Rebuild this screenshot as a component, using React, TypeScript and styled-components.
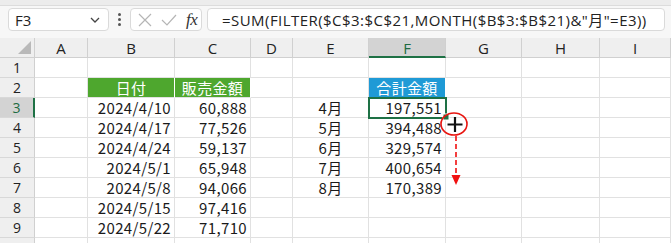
import styled, { createGlobalStyle } from "styled-components";

const GlobalStyle = createGlobalStyle`
  html, body {
    margin: 0;
    padding: 0;
    background: #ffffff;
  }
  body {
    width: 671px;
    height: 243px;
    overflow: hidden;
    font-family: "Noto Sans CJK JP", "Noto Sans", sans-serif;
  }
`;

const COLS = [
  { key: "A", width: 53 },
  { key: "B", width: 87 },
  { key: "C", width: 76 },
  { key: "D", width: 42 },
  { key: "E", width: 76 },
  { key: "F", width: 77 },
  { key: "G", width: 76 },
  { key: "H", width: 78 },
  { key: "I", width: 71 },
];

type CellData = { text: string; align?: "left" | "center" | "right"; fill?: string; color?: string };

const sheet: Record<number, Record<string, CellData>> = {
  2: {
    B: { text: "日付", align: "center", fill: "#4ea72e", color: "#ffffff" },
    C: { text: "販売金額", align: "center", fill: "#4ea72e", color: "#ffffff" },
    F: { text: "合計金額", align: "center", fill: "#1f9ad6", color: "#ffffff" },
  },
  3: { B: { text: "2024/4/10" }, C: { text: "60,888" }, E: { text: "4月", align: "center" }, F: { text: "197,551" } },
  4: { B: { text: "2024/4/17" }, C: { text: "77,526" }, E: { text: "5月", align: "center" }, F: { text: "394,488" } },
  5: { B: { text: "2024/4/24" }, C: { text: "59,137" }, E: { text: "6月", align: "center" }, F: { text: "329,574" } },
  6: { B: { text: "2024/5/1" }, C: { text: "65,948" }, E: { text: "7月", align: "center" }, F: { text: "400,654" } },
  7: { B: { text: "2024/5/8" }, C: { text: "94,066" }, E: { text: "8月", align: "center" }, F: { text: "170,389" } },
  8: { B: { text: "2024/5/15" }, C: { text: "97,416" } },
  9: { B: { text: "2024/5/22" }, C: { text: "71,710" } },
};

// --------------------- FORMULA BAR ---------------------------------

const TopStrip = styled.div`
  height: 5px;
  background: #ececec;
  border-bottom: 1px solid #dcdcdc;
`;

const Toolbar = styled.div`
  height: 32px;
  display: flex;
  align-items: flex-start;
  padding: 2px 6px 0 8px;
  background: #f7f7f7;
  box-sizing: border-box;
`;

const Box = styled.div<{ $w?: number; $grow?: boolean }>`
  height: 23px;
  box-sizing: border-box;
  background: #ffffff;
  border: 1px solid #dadada;
  border-radius: 4px;
  display: flex;
  align-items: center;
  width: ${({ $w }) => ($w ? `${$w}px` : "auto")};
  flex: ${({ $grow }) => ($grow ? 1 : "none")};
  margin-left: ${({ $grow }) => ($grow ? "5px" : "0")};
`;

const NameText = styled.span`
  flex: 1;
  padding-left: 6px;
  font-family: "Open Sans", "Noto Sans", sans-serif;
  font-size: 15px;
  color: #222;
`;

const Dots = styled.div`
  width: 21px;
  display: flex;
  flex-direction: column;
  align-items: center;
  justify-content: center;
  gap: 2px;
  height: 23px;
  span {
    width: 3px;
    height: 3px;
    border-radius: 50%;
    background: #555;
  }
`;

const FxText = styled.span`
  font-family: "Liberation Serif", serif;
  font-style: italic;
  font-size: 17px;
  color: #333;
  margin-left: 8px;
  letter-spacing: -0.5px;
`;

const FormulaText = styled.span`
  padding-left: 14px;
  font-family: "Open Sans", "Noto Sans CJK JP", sans-serif;
  font-size: 15px;
  letter-spacing: 0.45px;
  color: #222;
  white-space: nowrap;
`;

// --------------------- GRID ---------------------------------

const Grid = styled.div`
  position: relative;
  display: grid;
  grid-template-columns: 35px ${COLS.map((c) => `${c.width}px`).join(" ")};
  grid-auto-rows: 20px;
`;

const Corner = styled.div`
  background: #efefef;
  border-right: 1px solid #d0d0d0;
  border-bottom: 1px solid #d0d0d0;
  box-sizing: border-box;
  position: relative;
  &::after {
    content: "";
    position: absolute;
    right: 3px;
    bottom: 3px;
    border-left: 13px solid transparent;
    border-bottom: 13px solid #b9b9b9;
  }
`;

const ColHead = styled.div<{ $active?: boolean }>`
  box-sizing: border-box;
  background: ${({ $active }) => ($active ? "#d3d3d3" : "#efefef")};
  border-right: 1px solid #d0d0d0;
  border-bottom: ${({ $active }) => ($active ? "2px solid #1e7145" : "1px solid #d0d0d0")};
  font-family: "Open Sans", "Noto Sans", sans-serif;
  font-size: 15px;
  color: ${({ $active }) => ($active ? "#1e6b42" : "#222")};
  display: flex;
  align-items: center;
  justify-content: center;
  padding-top: 1px;
`;

const RowHead = styled.div<{ $active?: boolean }>`
  box-sizing: border-box;
  background: ${({ $active }) => ($active ? "#d3d3d3" : "#efefef")};
  border-right: ${({ $active }) => ($active ? "2px solid #1e7145" : "1px solid #d0d0d0")};
  border-bottom: 1px solid #d8d8d8;
  font-family: "Open Sans", "Noto Sans", sans-serif;
  font-size: 14px;
  color: ${({ $active }) => ($active ? "#1e6b42" : "#222")};
  display: flex;
  align-items: center;
  justify-content: center;
`;

const Cell = styled.div<{ $align?: string; $fill?: string; $color?: string; $selected?: boolean }>`
  position: relative;
  box-sizing: border-box;
  border-right: 1px solid ${({ $fill }) => ($fill ? "#ffffff" : "#e1e1e1")};
  border-bottom: 1px solid #e1e1e1;
  background: ${({ $fill }) => $fill || "#ffffff"};
  color: ${({ $color }) => $color || "#1a1a1a"};
  font-size: 15px;
  letter-spacing: 0.35px;
  line-height: 19px;
  padding: 0 3px 0 3px;
  text-align: ${({ $align }) => $align || "right"};
  white-space: nowrap;
  overflow: hidden;
  outline: ${({ $selected }) => ($selected ? "2px solid #1e7145" : "none")};
  outline-offset: -1px;
  z-index: ${({ $selected }) => ($selected ? 1 : 0)};
`;

const Overlay = styled.svg`
  position: absolute;
  left: 0;
  top: 0;
  pointer-events: none;
  z-index: 2;
`;

const rows = [1, 2, 3, 4, 5, 6, 7, 8, 9, 10];

export default function App() {
  return (
    <>
      <GlobalStyle />
      <TopStrip />
      <Toolbar>
        <Box $w={101}>
          <NameText>F3</NameText>
          <svg width="14" height="14" viewBox="0 0 14 14" style={{ marginRight: 6 }}>
            <path d="M3 5 L7 9 L11 5" fill="none" stroke="#444" strokeWidth="1.3" />
          </svg>
        </Box>
        <Dots>
          <span />
          <span />
          <span />
        </Dots>
        <Box $w={72}>
          <svg width="16" height="16" viewBox="0 0 16 16" style={{ marginLeft: 6 }}>
            <path d="M2 2 L14 14 M14 2 L2 14" stroke="#b5b5b5" strokeWidth="1.2" />
          </svg>
          <svg width="18" height="16" viewBox="0 0 18 16" style={{ marginLeft: 7 }}>
            <path d="M2 8 L7 13 L16 3" fill="none" stroke="#b5b5b5" strokeWidth="1.2" />
          </svg>
          <FxText>fx</FxText>
        </Box>
        <Box $grow>
          <FormulaText>=SUM(FILTER($C$3:$C$21,MONTH($B$3:$B$21)&"月"=E3))</FormulaText>
        </Box>
      </Toolbar>
      <Grid>
        <Corner />
        {COLS.map((c) => (
          <ColHead key={c.key} $active={c.key === "F"}>
            {c.key}
          </ColHead>
        ))}
        {rows.map((r) => [
          <RowHead key={`h${r}`} $active={r === 3}>
            {r < 10 ? r : ""}
          </RowHead>,
          ...COLS.map((c) => {
            const d = sheet[r]?.[c.key];
            return (
              <Cell
                key={`${c.key}${r}`}
                $align={d?.align}
                $fill={d?.fill}
                $color={d?.color}
                $selected={r === 3 && c.key === "F"}
              >
                {d?.text}
              </Cell>
            );
          }),
        ])}
        <Overlay width="671" height="205" viewBox="0 0 671 205">
          {/* fill handle (grid origin is y=38) */}
          <rect x="443" y="76" width="6" height="6" fill="#1e7145" stroke="#fff" strokeWidth="1" />
          {/* cross cursor */}
          <path d="M455 79 V94 M447.5 86.5 H462.5" stroke="#111" strokeWidth="2.2" />
          {/* red circle */}
          <ellipse cx="454" cy="86" rx="13" ry="11" fill="none" stroke="#e8140f" strokeWidth="1.6" />
          {/* dashed arrow */}
          <path d="M456 98 V138" stroke="#f01010" strokeWidth="1.6" strokeDasharray="5 3" />
          <path d="M451.5 137 L460.5 137 L456 147 Z" fill="#f01010" />
        </Overlay>
      </Grid>
    </>
  );
}
